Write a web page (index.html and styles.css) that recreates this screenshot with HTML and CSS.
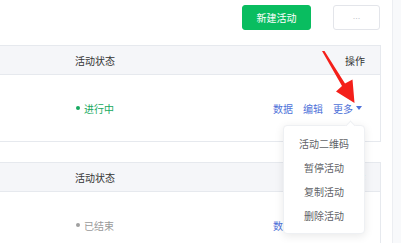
FILE: index.html
```html
<!DOCTYPE html>
<html lang="zh-CN">
<head>
<meta charset="utf-8">
<title>活动列表</title>
<link rel="stylesheet" href="styles.css">
</head>
<body>
<div class="page">
  <div class="main">
    <div class="toolbar">
      <button class="btn btn-primary">新建活动</button>
      <button class="btn btn-more">...</button>
    </div>

    <div class="card">
      <div class="thead">
        <div></div>
        <div class="th">活动状态</div>
        <div class="th th-ops">操作</div>
      </div>
      <div class="trow">
        <div></div>
        <div class="status status-on"><span class="dot"></span>进行中</div>
        <div class="ops">
          <a class="link">数据</a>
          <a class="link">编辑</a>
          <a class="link link-more">更多<span class="caret"></span></a>
        </div>
      </div>
    </div>

    <div class="card card-second">
      <div class="thead">
        <div></div>
        <div class="th">活动状态</div>
        <div class="th th-ops">操作</div>
      </div>
      <div class="trow">
        <div></div>
        <div class="status status-off"><span class="dot"></span>已结束</div>
        <div class="ops">
          <a class="link">数据</a>
          <a class="link is-covered">编辑</a>
          <a class="link link-more is-covered">更多<span class="caret"></span></a>
        </div>
      </div>
    </div>
  </div>
  <div class="gutter"></div>
  <div class="side"></div>

  <ul class="dropdown">
    <li class="dropdown-arrow"></li>
    <li class="dropdown-item">活动二维码</li>
    <li class="dropdown-item">暂停活动</li>
    <li class="dropdown-item">复制活动</li>
    <li class="dropdown-item">删除活动</li>
  </ul>

  <svg class="pointer" width="401" height="243" viewBox="0 0 401 243">
    <polygon points="322,51 324.5,51 345,83.5 352.5,79.5 354.5,103 336,91.5 342,86" fill="#f41f1a"/>
  </svg>
</div>
</body>
</html>
```

FILE: styles.css
```css
html, body {
  margin: 0;
  padding: 0;
  height: 243px;
  overflow: hidden;
  background: #ffffff;
}

body {
  font-family: "Noto Sans CJK SC", "Noto Sans", sans-serif;
  font-size: 10px;
  color: #333333;
}

.page {
  position: relative;
  display: flex;
  height: 243px;
}

.main {
  width: 381px;
  flex: none;
}

.gutter {
  width: 11px;
  flex: none;
}

.side {
  flex: 1;
  background: #f8f9fb;
  border-left: 1px solid #eceef2;
}

.toolbar {
  height: 45px;
  box-sizing: border-box;
  display: flex;
  justify-content: flex-end;
  align-items: flex-start;
  gap: 22px;
  padding-top: 5px;
  padding-right: 1px;
}

.btn {
  height: 25px;
  box-sizing: border-box;
  border-radius: 3px;
  font-family: inherit;
  font-size: 10px;
  line-height: 1;
  padding: 0;
  cursor: pointer;
}

.btn-primary {
  width: 69px;
  background: #09bd60;
  border: 1px solid #09bd60;
  color: #ffffff;
}

.btn-more {
  width: 47px;
  background: #ffffff;
  border: 1px solid #e3e5ea;
  color: #c2c4c9;
  font-family: "Liberation Sans", sans-serif;
  font-size: 9px;
  padding-bottom: 3px;
}

.card {
  border-top: 1px solid #e6e9ee;
  border-right: 1px solid #e6e9ee;
  border-bottom: 1px solid #e6e9ee;
}

.card-second {
  margin-top: 20px;
}

.thead {
  display: grid;
  grid-template-columns: 75px 1fr auto;
  align-items: center;
  height: 28px;
  padding-right: 15px;
  background: #f5f6f9;
  border-bottom: 1px solid #e6e9ee;
}

.th {
  color: #333333;
}

.trow {
  display: grid;
  grid-template-columns: 75px 1fr auto;
  align-items: center;
  height: 66px;
  padding-right: 18px;
}

.status {
  display: flex;
  align-items: center;
}

.dot {
  width: 4px;
  height: 4px;
  border-radius: 50%;
  margin-left: 1px;
  margin-right: 4px;
}

.status-on {
  color: #16a960;
}

.status-on .dot {
  background: #16a960;
}

.status-off {
  color: #9a9a9a;
}

.status-off .dot {
  background: #a0a0a0;
}

.ops {
  display: flex;
  align-items: center;
  gap: 10px;
}

.link {
  color: #4f72d9;
  cursor: pointer;
}

.is-covered {
  visibility: hidden;
}

.link-more {
  display: flex;
  align-items: center;
}

.caret {
  width: 0;
  height: 0;
  margin-left: 3px;
  border-left: 3.5px solid transparent;
  border-right: 3.5px solid transparent;
  border-top: 4px solid #4f72d9;
}

.dropdown {
  position: absolute;
  left: 283px;
  top: 125px;
  width: 82px;
  margin: 0;
  padding: 6px 0 5px;
  list-style: none;
  box-sizing: border-box;
  background: #ffffff;
  border: 1px solid #eef0f3;
  border-radius: 4px;
  box-shadow: 0 2px 10px rgba(0, 0, 0, 0.09);
}

.dropdown-arrow {
  position: absolute;
  top: -4px;
  left: 63px;
  width: 6px;
  height: 6px;
  background: #ffffff;
  border-top: 1px solid #eef0f3;
  border-left: 1px solid #eef0f3;
  transform: rotate(45deg);
}

.dropdown-item {
  height: 24px;
  line-height: 24px;
  text-align: center;
  color: #606266;
}

.pointer {
  position: absolute;
  left: 0;
  top: 0;
  pointer-events: none;
}
```
